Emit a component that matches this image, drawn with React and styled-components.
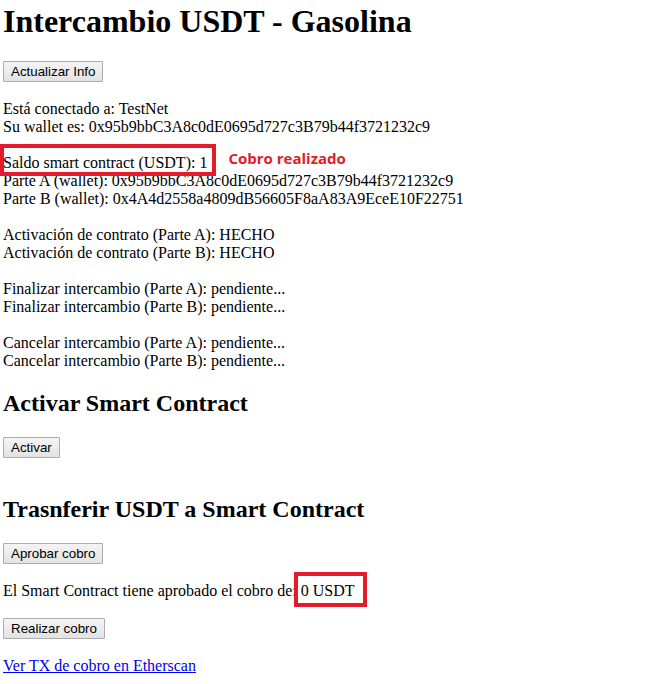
import styled, { createGlobalStyle } from 'styled-components';

const GlobalStyle = createGlobalStyle`
  html, body {
    margin: 0;
    padding: 0;
    background: #fff;
  }
  body {
    font-family: "Liberation Serif", "Times New Roman", serif;
    font-size: 16px;
    color: #000;
  }
`;

const Page = styled.div`
  padding: 0 3px;
  display: flow-root;
`;

const Title = styled.h1`
  font-size: 32px;
  font-weight: bold;
  margin: 3px 0 21.44px;
`;

const Section = styled.h2`
  font-size: 24px;
  font-weight: bold;
  margin: 19.92px 0;
`;

// text and buttons run inline, blank lines come from <br />
const Flow = styled.div`
  line-height: 18px;
`;

const Button = styled.button`
  font-family: "Liberation Sans", Arial, sans-serif;
  font-size: 13.3333px;
  line-height: normal;
  color: #000;
  padding: 2px 7px;
  border: 1px solid #adadad;
  border-radius: 1px;
  background: linear-gradient(#f4f4f4, #e3e3e3);
  cursor: pointer;
`;

const Marked = styled.span`
  position: relative;
  z-index: 1;

  &::before {
    content: '';
    position: absolute;
    z-index: -1;
    top: ${({ $top }) => $top}px;
    bottom: ${({ $bottom }) => $bottom}px;
    left: ${({ $left }) => $left}px;
    right: ${({ $right }) => $right}px;
    background: #fff;
    border: 4px solid #e31b2a;
  }
`;

const Note = styled.span`
  position: absolute;
  left: calc(100% + 21px);
  top: -6px;
  white-space: nowrap;
  font-family: "Open Sans", "Noto Sans", sans-serif;
  font-weight: bold;
  font-size: 15px;
  line-height: 20px;
  color: #e31b2a;
`;

const TxLink = styled.a`
  color: #0000ee;
  text-decoration: underline;
`;

export default function App() {
  return (
    <>
      <GlobalStyle />
      <Page>
        <Title>Intercambio USDT - Gasolina</Title>
        <Flow>
          <Button>Actualizar Info</Button>
          <br />
          <br />
          Está conectado a: TestNet
          <br />
          Su wallet es: 0x95b9bbC3A8c0dE0695d727c3B79b44f3721232c9
          <br />
          <br />
          <Marked $top={-10} $bottom={-5} $left={-3} $right={-9}>
            Saldo smart contract (USDT): 1
            <Note>Cobro realizado</Note>
          </Marked>
          <br />
          Parte A (wallet): 0x95b9bbC3A8c0dE0695d727c3B79b44f3721232c9
          <br />
          Parte B (wallet): 0x4A4d2558a4809dB56605F8aA83A9EceE10F22751
          <br />
          <br />
          Activación de contrato (Parte A): HECHO
          <br />
          Activación de contrato (Parte B): HECHO
          <br />
          <br />
          Finalizar intercambio (Parte A): pendiente...
          <br />
          Finalizar intercambio (Parte B): pendiente...
          <br />
          <br />
          Cancelar intercambio (Parte A): pendiente...
          <br />
          Cancelar intercambio (Parte B): pendiente...
        </Flow>
        <Section>Activar Smart Contract</Section>
        <Flow>
          <Button>Activar</Button>
          <br />
          <br />
        </Flow>
        <Section>Trasnferir USDT a Smart Contract</Section>
        <Flow>
          <Button>Aprobar cobro</Button>
          <br />
          <br />
          El Smart Contract tiene aprobado el cobro de:{' '}
          <Marked $top={-10} $bottom={-8} $left={-7} $right={-13}>
            0 USDT
          </Marked>
          <br />
          <br />
          <Button>Realizar cobro</Button>
          <br />
          <br />
          <TxLink href="#">Ver TX de cobro en Etherscan</TxLink>
        </Flow>
      </Page>
    </>
  );
}
